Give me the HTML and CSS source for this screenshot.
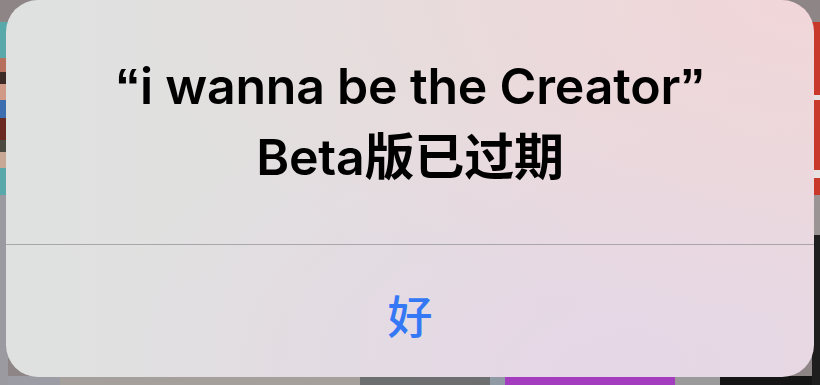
FILE: index.html
```html
<!DOCTYPE html>
<html lang="zh-CN">
<head>
    <meta charset="UTF-8">
    <title>Beta 已过期</title>
    <link rel="stylesheet" href="styles.css">
</head>
<body>
    <div class="alert">
        <div class="alert-body">
            <div class="alert-title"><span class="quote">“</span>i wanna be the Creator<span class="quote">”</span><br>Beta版已过期</div>
        </div>
        <div class="divider"></div>
        <button class="alert-action">好</button>
    </div>
</body>
</html>
```

FILE: styles.css
```css
html, body {
    margin: 0;
    width: 820px;
    height: 385px;
    overflow: hidden;
}
body {
    background-color: #8e8586;
    background-image:
        linear-gradient(to bottom, #8e8586 0 22px, #5aa9aa 22px 58px, #b8705e 58px 72px, #3b2a26 72px 84px, #d09a86 84px 100px, #3d6fb0 100px 118px, #6a2a22 118px 140px, #4a4a40 140px 152px, #c8a894 152px 168px, #5aa9aa 168px 195px, #9c9aa1 195px),
        linear-gradient(to bottom, #8e8586 0 22px, #c8392c 22px 95px, #e6e2e2 95px 100px, #c8392c 100px 170px, #e6e2e2 170px 178px, #c8392c 178px 195px, #9a9494 195px 235px, #1e1e1e 235px),
        linear-gradient(to right, #9c9ca4 0 60px, #a5a09c 60px 360px, #6c6e70 360px 490px, #8f9aa4 490px 505px, #a43cc0 505px 675px, #9a9a9a 675px 720px, #151515 720px);
    background-size: 8px 385px, 8px 385px, 820px 10px;
    background-position: 0 0, 812px 0, 0 376px;
    background-repeat: no-repeat;
    font-family: Inter, "Noto Sans CJK SC", sans-serif;
}
.alert {
    margin: 0 6px;
    height: 377px;
    border-radius: 32px;
    background:
        radial-gradient(ellipse at 100% 0%, rgba(242, 214, 216, 0.9), rgba(242, 214, 216, 0) 60%),
        radial-gradient(ellipse at 75% 100%, rgba(230, 214, 232, 0.9), rgba(230, 214, 232, 0) 60%),
        linear-gradient(to right, #dfe1e0, #e2dfdf 50%, #e8dade);
    display: flex;
    flex-direction: column;
    overflow: hidden;
}
.alert-body {
    height: 244px;
    display: flex;
    justify-content: center;
    padding-top: 51px;
    box-sizing: border-box;
}
.alert-title {
    font-size: 50px;
    font-weight: 600;
    line-height: 70px;
    text-align: center;
    color: #000;
    letter-spacing: -0.2px;
}
.quote {
    font-family: "Liberation Sans", sans-serif;
    font-weight: 700;
}
.divider {
    height: 1px;
    background-color: #a8a6a8;
}
.alert-action {
    flex-grow: 1;
    border: none;
    background: transparent;
    font-family: "Noto Sans CJK SC", sans-serif;
    font-size: 45px;
    font-weight: 500;
    color: #3478f6;
    padding: 6px 0 0;
}
```
